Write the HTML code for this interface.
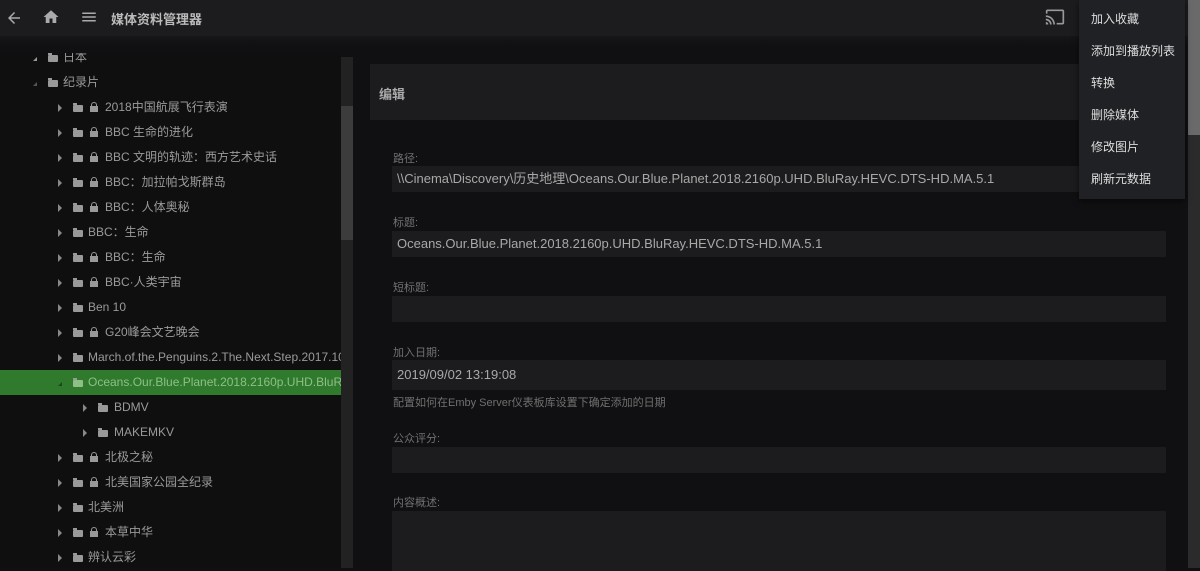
<!DOCTYPE html>
<html><head><meta charset="utf-8"><style>
*{margin:0;padding:0;box-sizing:border-box}
body{width:1200px;height:568px;overflow:hidden;background:#101012;font-family:"Liberation Sans","Noto Sans CJK SC",sans-serif;color:#bbb;position:relative}
.hdr{position:absolute;left:0;top:0;width:1200px;height:36px;background:#1c1c1e}
.hdr2{position:absolute;left:0;top:36px;width:1200px;height:10px;background:linear-gradient(#161618,#101012)}
.title{position:absolute;left:111px;top:9px;font-size:13px;font-weight:bold;color:#bbb}
.tree{position:absolute;left:0;top:53px;width:341px;height:515px;background:#0f0f10;overflow:hidden}
.row{position:absolute;height:25px;font-size:12px;color:#9a9a9a;white-space:nowrap;line-height:25px;left:0;width:341px;overflow:hidden}
.row.sel{background:#2f7a2c;color:#8fbf87}
.arr{position:absolute;width:0;height:0;border-left:4px solid #888;border-top:4px solid transparent;border-bottom:4px solid transparent;top:9px}
.dn{position:absolute;width:0;height:0;border-right:4px solid #555;border-top:4px solid transparent;top:12px;transform:rotate(0deg)}
.fold{position:absolute;width:10px;height:7px;background:#999;top:10px;border-radius:1px}
.fold:before{content:"";position:absolute;left:0;top:-2px;width:4px;height:2px;background:#999}
.lock{position:absolute;width:8px;height:6px;background:#999;top:11px}
.lock:before{content:"";position:absolute;left:1px;top:-4px;width:6px;height:5px;border:1.5px solid #999;border-bottom:none;border-radius:3px 3px 0 0;box-sizing:border-box}
.txt{position:absolute;top:0}
.sb{position:absolute;left:341px;top:57px;width:12px;height:511px;background:#222}
.sbt{position:absolute;left:341px;top:106px;width:12px;height:134px;background:#3c3c3c}
.panel{position:absolute;left:370px;top:64px;width:815px;height:56px;background:#1c1c1e}
.panel span{position:absolute;left:9px;top:20px;font-size:13px;font-weight:bold;color:#aaa}
.lbl{position:absolute;left:393px;font-size:11px;color:#707070}
.inp{position:absolute;left:392px;width:774px;height:26px;background:#1c1c1e;font-size:13px;color:#a8a8a8;padding-left:5px;line-height:26px;white-space:nowrap;overflow:hidden}
.menu{position:absolute;left:1079px;top:0;width:106px;height:199px;background:#202124;box-shadow:0 2px 6px rgba(0,0,0,.6)}
.menu div{position:absolute;left:12px;font-size:12px;color:#ddd}
.vs{position:absolute;left:1188px;top:0;width:12px;height:568px;background:#2b2b2b}
.vst{position:absolute;left:1188px;top:0;width:12px;height:135px;background:#6a6a6a}
</style></head><body>
<div class="hdr"></div><div class="hdr2"></div>
<svg style="position:absolute;left:5px;top:9px" width="18" height="18" viewBox="0 0 24 24"><path d="M20 11H7.8l5.6-5.6L12 4l-8 8 8 8 1.4-1.4L7.8 13H20z" fill="#aaa"/></svg>
<svg style="position:absolute;left:42px;top:8px" width="18" height="18" viewBox="0 0 24 24"><path d="M10 20v-6h4v6h5v-8h3L12 3 2 12h3v8z" fill="#aaa"/></svg>
<svg style="position:absolute;left:80px;top:8px" width="18" height="18" viewBox="0 0 24 24"><path d="M3 18h18v-2H3zm0-5h18v-2H3zm0-7v2h18V6z" fill="#aaa"/></svg>
<div class="title">媒体资料管理器</div>
<svg style="position:absolute;left:1045px;top:7px" width="20" height="20" viewBox="0 0 24 24"><path d="M21 3H3c-1.1 0-2 .9-2 2v3h2V5h18v14h-7v2h7c1.1 0 2-.9 2-2V5c0-1.1-.9-2-2-2zM1 18v3h3c0-1.7-1.3-3-3-3zm0-4v2c2.8 0 5 2.2 5 5h2c0-3.9-3.1-7-7-7zm0-4v2c5 0 9 4 9 9h2c0-6.1-4.9-11-11-11z" fill="#999"/></svg>

<div class="tree">
<div class="row" style="top:-8px"><div class="dn" style="left:33px;border-right-color:#999"></div><div class="fold" style="left:48px"></div><span class="txt" style="left:63px">日本</span></div>
<div class="row" style="top:17px"><div class="dn" style="left:33px"></div><div class="fold" style="left:48px"></div><span class="txt" style="left:63px">纪录片</span></div>
<div class="row" style="top:42px"><div class="arr" style="left:58px"></div><div class="fold" style="left:73px"></div><div class="lock" style="left:90px"></div><span class="txt" style="left:105px">2018中国航展飞行表演</span></div>
<div class="row" style="top:67px"><div class="arr" style="left:58px"></div><div class="fold" style="left:73px"></div><div class="lock" style="left:90px"></div><span class="txt" style="left:105px">BBC 生命的进化</span></div>
<div class="row" style="top:92px"><div class="arr" style="left:58px"></div><div class="fold" style="left:73px"></div><div class="lock" style="left:90px"></div><span class="txt" style="left:105px">BBC 文明的轨迹：西方艺术史话</span></div>
<div class="row" style="top:117px"><div class="arr" style="left:58px"></div><div class="fold" style="left:73px"></div><div class="lock" style="left:90px"></div><span class="txt" style="left:105px">BBC：加拉帕戈斯群岛</span></div>
<div class="row" style="top:142px"><div class="arr" style="left:58px"></div><div class="fold" style="left:73px"></div><div class="lock" style="left:90px"></div><span class="txt" style="left:105px">BBC：人体奥秘</span></div>
<div class="row" style="top:167px"><div class="arr" style="left:58px"></div><div class="fold" style="left:73px"></div><span class="txt" style="left:88px">BBC：生命</span></div>
<div class="row" style="top:192px"><div class="arr" style="left:58px"></div><div class="fold" style="left:73px"></div><div class="lock" style="left:90px"></div><span class="txt" style="left:105px">BBC：生命</span></div>
<div class="row" style="top:217px"><div class="arr" style="left:58px"></div><div class="fold" style="left:73px"></div><div class="lock" style="left:90px"></div><span class="txt" style="left:105px">BBC·人类宇宙</span></div>
<div class="row" style="top:242px"><div class="arr" style="left:58px"></div><div class="fold" style="left:73px"></div><span class="txt" style="left:88px">Ben 10</span></div>
<div class="row" style="top:267px"><div class="arr" style="left:58px"></div><div class="fold" style="left:73px"></div><div class="lock" style="left:90px"></div><span class="txt" style="left:105px">G20峰会文艺晚会</span></div>
<div class="row" style="top:292px"><div class="arr" style="left:58px"></div><div class="fold" style="left:73px"></div><span class="txt" style="left:88px">March.of.the.Penguins.2.The.Next.Step.2017.1080p</span></div>
<div class="row sel" style="top:317px"><div class="dn" style="left:58px;border-right-color:#1a4a1a"></div><div class="fold" style="left:73px;background:#8fbf87"></div><span class="txt" style="left:88px">Oceans.Our.Blue.Planet.2018.2160p.UHD.BluRay.HEVC</span></div>
<div class="row" style="top:342px"><div class="arr" style="left:83px"></div><div class="fold" style="left:98px"></div><span class="txt" style="left:114px">BDMV</span></div>
<div class="row" style="top:367px"><div class="arr" style="left:83px"></div><div class="fold" style="left:98px"></div><span class="txt" style="left:114px">MAKEMKV</span></div>
<div class="row" style="top:392px"><div class="arr" style="left:58px"></div><div class="fold" style="left:73px"></div><div class="lock" style="left:90px"></div><span class="txt" style="left:105px">北极之秘</span></div>
<div class="row" style="top:417px"><div class="arr" style="left:58px"></div><div class="fold" style="left:73px"></div><div class="lock" style="left:90px"></div><span class="txt" style="left:105px">北美国家公园全纪录</span></div>
<div class="row" style="top:442px"><div class="arr" style="left:58px"></div><div class="fold" style="left:73px"></div><span class="txt" style="left:88px">北美洲</span></div>
<div class="row" style="top:467px"><div class="arr" style="left:58px"></div><div class="fold" style="left:73px"></div><div class="lock" style="left:90px"></div><span class="txt" style="left:105px">本草中华</span></div>
<div class="row" style="top:492px"><div class="arr" style="left:58px"></div><div class="fold" style="left:73px"></div><span class="txt" style="left:88px">辨认云彩</span></div>
</div>
<div class="sb"></div><div class="sbt"></div>

<div class="panel"><span>编辑</span></div>
<div class="lbl" style="top:150px">路径:</div>
<div class="inp" style="top:166px">\\Cinema\Discovery\历史地理\Oceans.Our.Blue.Planet.2018.2160p.UHD.BluRay.HEVC.DTS-HD.MA.5.1</div>
<div class="lbl" style="top:214px">标题:</div>
<div class="inp" style="top:231px">Oceans.Our.Blue.Planet.2018.2160p.UHD.BluRay.HEVC.DTS-HD.MA.5.1</div>
<div class="lbl" style="top:279px">短标题:</div>
<div class="inp" style="top:296px"></div>
<div class="lbl" style="top:344px">加入日期:</div>
<div class="inp" style="top:360px;height:30px;line-height:30px">2019/09/02 13:19:08</div>
<div class="lbl" style="top:394px">配置如何在Emby Server仪表板库设置下确定添加的日期</div>
<div class="lbl" style="top:430px">公众评分:</div>
<div class="inp" style="top:447px"></div>
<div class="lbl" style="top:494px">内容概述:</div>
<div class="inp" style="top:511px;height:60px"></div>

<div class="vs"></div><div class="vst"></div>
<div class="menu">
<div style="top:10px">加入收藏</div>
<div style="top:42px">添加到播放列表</div>
<div style="top:74px">转换</div>
<div style="top:106px">删除媒体</div>
<div style="top:138px">修改图片</div>
<div style="top:170px">刷新元数据</div>
</div>
</body></html>
